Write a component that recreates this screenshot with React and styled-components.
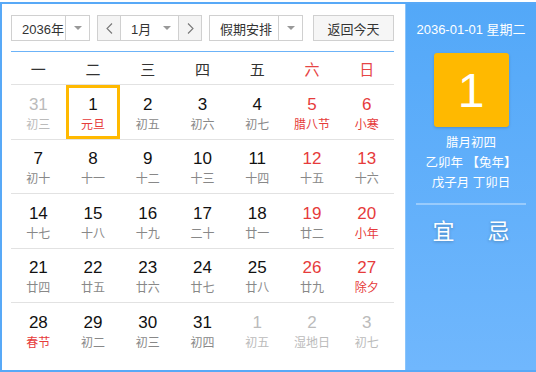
import React from 'react';
import styled, {createGlobalStyle} from 'styled-components';

const Global = createGlobalStyle`
html, body {
  margin: 0;
  padding: 0;
  background: #fff;
  overflow: hidden;
}
body {
  font-family: "Liberation Sans", "Noto Sans CJK SC", sans-serif;
}
`

const Widget = styled.div`
display: flex;
width: 534px;
margin-top: 2px;
border: 2px solid #58a9f7;
border-right: none;
background: #fff;
`

const Main = styled.div`
width: 383px;
padding: 11px 11px 12px 9px;
`

const Toolbar = styled.div`
display: flex;
align-items: center;
height: 26px;
`

const SelectBox = styled.div`
display: flex;
box-sizing: border-box;
width: ${p => p.w}px;
height: 26px;
margin-right: ${p => p.mr || 0}px;
border: 1px solid #d0d0d0;
color: #333;
font-size: 13px;
`

const SelectLabel = styled.div`
flex: 1;
display: flex;
align-items: center;
padding-left: ${p => p.pl || 10}px;
`

const ArrowCell = styled.div`
width: 23px;
display: flex;
align-items: center;
justify-content: center;
border-left: ${p => p.plain ? 'none' : '1px solid #d0d0d0'};
`

const Caret = styled.span`
width: 0;
height: 0;
border-left: 4px solid transparent;
border-right: 4px solid transparent;
border-top: 4px solid #999;
`

const NavBtn = styled.div`
width: ${p => p.w}px;
display: flex;
align-items: center;
justify-content: center;
background: #f4f4f4;
border-left: ${p => p.divider ? '1px solid #d0d0d0' : 'none'};
border-right: ${p => p.divider ? 'none' : '1px solid #d0d0d0'};
`

const MonthLabel = styled.div`
flex: 1;
display: flex;
align-items: center;
padding-left: 10px;
`

const TodayBtn = styled.div`
box-sizing: border-box;
width: 81px;
height: 26px;
margin-left: 10px;
display: flex;
align-items: center;
justify-content: center;
border: 1px solid #d0d0d0;
background: #f6f6f6;
color: #333;
font-size: 13px;
`

const BlueRule = styled.div`
height: 1px;
margin-top: 10px;
background: #6cb3f8;
`

const Grid = styled.div`
display: grid;
grid-template-columns: repeat(7, 1fr);
`

const HeadCell = styled.div`
height: 32px;
display: flex;
align-items: center;
justify-content: center;
border-bottom: 1px solid #e2e2e2;
font-size: 15px;
color: ${p => p.weekend ? '#e64545' : '#333'};
`

const DayCell = styled.div`
box-sizing: border-box;
height: 54.5px;
display: flex;
flex-direction: column;
align-items: center;
justify-content: center;
padding-top: 4px;
border-bottom: ${p => p.last ? 'none' : '1px solid #e2e2e2'};
box-shadow: ${p => p.selected ? 'inset 0 0 0 3px #ffb900' : 'none'};
`

const DayNum = styled.div`
font-size: 17px;
line-height: 20px;
color: ${p => p.tone};
`

const Lunar = styled.div`
margin-top: 2px;
font-size: 12px;
line-height: 16px;
color: ${p => p.tone};
`

const Side = styled.div`
width: 130px;
border-left: 1px solid #8ac4fb;
background: linear-gradient(#53a8f8, #70b7fd);
display: flex;
flex-direction: column;
align-items: center;
padding-top: 16px;
color: #fff;
`

const SideDate = styled.div`
font-size: 13px;
line-height: 20px;
`

const BigDay = styled.div`
width: 75px;
height: 74px;
margin-top: 13px;
border-radius: 3px;
background: #ffb900;
box-shadow: 0 1px 3px rgba(0, 0, 0, 0.18);
display: flex;
align-items: center;
justify-content: center;
font-size: 48px;
`

const SideInfo = styled.div`
margin-top: 6px;
font-size: 12.5px;
line-height: 20px;
text-align: center;
white-space: pre;
`

const SideRule = styled.div`
width: 110px;
height: 2px;
margin-top: 10px;
background: rgba(255, 255, 255, 0.35);
`

const YiJi = styled.div`
display: flex;
gap: 33px;
margin-top: 12px;
font-size: 22px;
line-height: 30px;
text-shadow: 0 1px 3px rgba(0, 0, 0, 0.25);
`

const Chevron = ({dir}) => (
  <svg width="7" height="11" viewBox="0 0 7 11">
    <polyline
      points={dir === 'left' ? '6,0.5 1,5.5 6,10.5' : '1,0.5 6,5.5 1,10.5'}
      fill="none"
      stroke="#777"
      strokeWidth="1.1"
    />
  </svg>
);

const WEEK = ['一', '二', '三', '四', '五', '六', '日'];

// [day, lunar, out of month, festival]
const DAYS = [
  [31, '初三', true], [1, '元旦', false, true], [2, '初五'], [3, '初六'], [4, '初七'], [5, '腊八节', false, true], [6, '小寒', false, true],
  [7, '初十'], [8, '十一'], [9, '十二'], [10, '十三'], [11, '十四'], [12, '十五'], [13, '十六'],
  [14, '十七'], [15, '十八'], [16, '十九'], [17, '二十'], [18, '廿一'], [19, '廿二'], [20, '小年', false, true],
  [21, '廿四'], [22, '廿五'], [23, '廿六'], [24, '廿七'], [25, '廿八'], [26, '廿九'], [27, '除夕', false, true],
  [28, '春节', false, true], [29, '初二'], [30, '初三'], [31, '初四'], [1, '初五', true], [2, '湿地日', true], [3, '初七', true],
];

const RED = '#e63b3b';

const App = () => {
  return (
    <React.Fragment>
      <Global />
      <Widget>
        <Main>
          <Toolbar>
            <SelectBox w={79} mr={7}>
              <SelectLabel>2036年</SelectLabel>
              <ArrowCell><Caret /></ArrowCell>
            </SelectBox>
            <SelectBox w={105} mr={7}>
              <NavBtn w={22}><Chevron dir="left" /></NavBtn>
              <MonthLabel>1月<span style={{flex: 1}} /></MonthLabel>
              <ArrowCell plain><Caret /></ArrowCell>
              <NavBtn w={22} divider><Chevron dir="right" /></NavBtn>
            </SelectBox>
            <SelectBox w={94}>
              <SelectLabel>假期安排</SelectLabel>
              <ArrowCell><Caret /></ArrowCell>
            </SelectBox>
            <TodayBtn>返回今天</TodayBtn>
          </Toolbar>
          <BlueRule />
          <Grid>
            {WEEK.map((w, i) => (
              <HeadCell key={w} weekend={i > 4}>{w}</HeadCell>
            ))}
            {DAYS.map(([d, lunar, out, fest], i) => {
              const weekend = i % 7 > 4;
              const numTone = out ? '#bbb' : weekend ? RED : '#111';
              const lunarTone = out ? '#bbb' : fest ? RED : '#888';
              return (
                <DayCell key={i} last={i >= 28} selected={i === 1}>
                  <DayNum tone={numTone}>{d}</DayNum>
                  <Lunar tone={lunarTone}>{lunar}</Lunar>
                </DayCell>
              );
            })}
          </Grid>
        </Main>
        <Side>
          <SideDate>2036-01-01 星期二</SideDate>
          <BigDay>1</BigDay>
          <SideInfo>{'腊月初四\n乙卯年 【兔年】\n戊子月 丁卯日'}</SideInfo>
          <SideRule />
          <YiJi>
            <span>宜</span>
            <span>忌</span>
          </YiJi>
        </Side>
      </Widget>
    </React.Fragment>
  );
};

export default App;
